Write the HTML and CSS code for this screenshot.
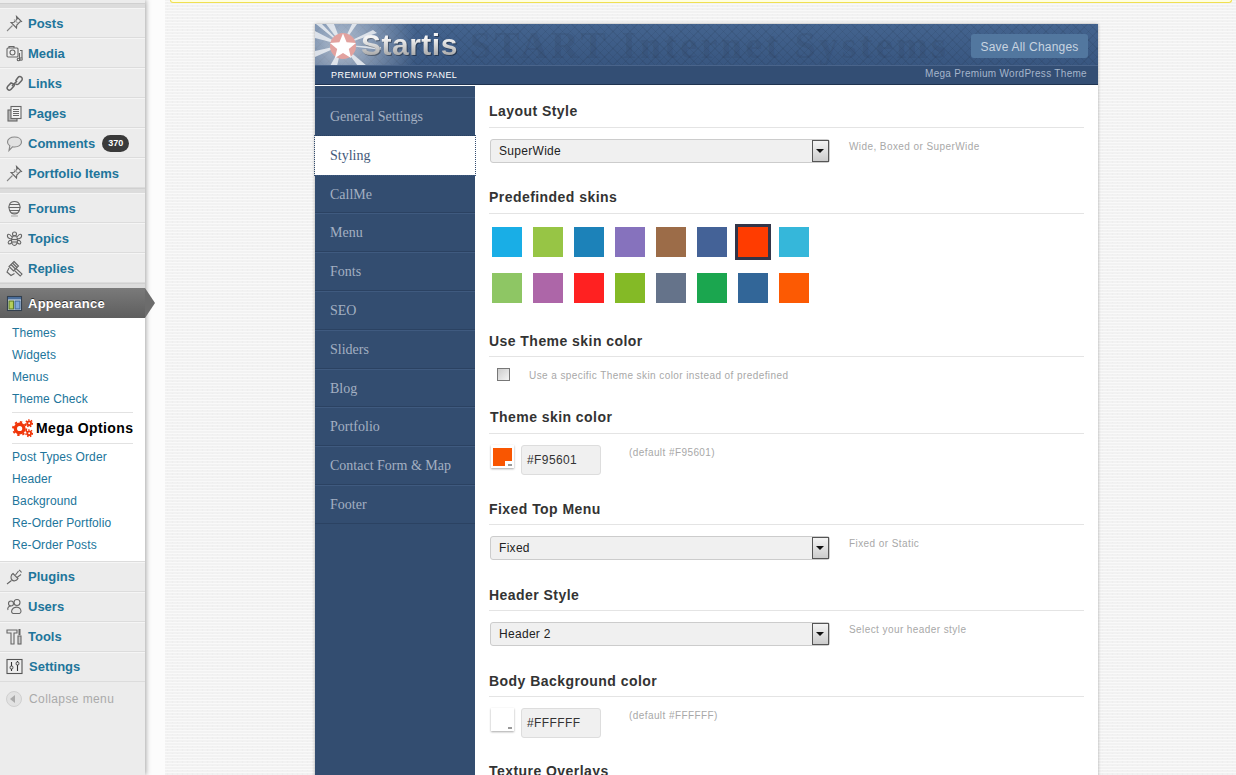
FILE: index.html
```html
<!DOCTYPE html>
<html lang="en">
<head>
    <meta charset="UTF-8">
    <meta name="viewport" content="width=device-width, initial-scale=1.0">
    <title>Mega Options</title>
    <link rel="stylesheet" href="styles.css">
</head>
<body>
    <svg width="0" height="0" class="defs">
        <defs>
            <g id="i-pin">
                <path d="M10.500 1.500l5 5-1.800 .6-2.900 2.900-.3 3-5.500-5.500 3-.3 2.900-2.900z" fill="#ececec"/>
                <path d="M8 4.500l4 4" stroke="#aaa"/>
                <path d="M6.500 10.500L1 16" stroke="#888"/>
            </g>
        </defs>
    </svg>

    <!-- Admin menu -->
    <div class="adminmenu">
        <div class="sep first"></div>
        <a class="item up" href="#"><svg class="ico" viewBox="0 0 17 17"><use href="#i-pin"/></svg><span>Posts</span></a>
        <a class="item up" href="#"><svg class="ico" viewBox="0 0 17 17"><rect x="1" y="3" width="11" height="9" rx="1" fill="#eee"/><circle cx="6.500" cy="7.500" r="2.500"/><path d="M3 3V1.500h5V3M14 5.500h2V13M13.500 8v6"/><circle cx="12.500" cy="14.500" r="1.300"/><circle cx="15" cy="14" r="1.300"/></svg><span>Media</span></a>
        <a class="item up" href="#"><svg class="ico" viewBox="0 0 17 17"><path d="M9.500 6l2.500-3.500c1-1.200 2.500-1.200 3.500-.3s1 2.500 0 3.500L12.500 9c-1 .8-2 .8-3-.2" stroke-width="1.500"/><path d="M7.500 9L5 8 1.800 11.200c-1 1.200-.8 2.500 0 3.300s2.300 1 3.300-.2L8 11c.8-1 .6-1.600 0-2.500" stroke-width="1.500"/><path d="M6 11l5-5" stroke-width="1.600"/></svg><span>Links</span></a>
        <a class="item up" href="#"><svg class="ico" viewBox="0 0 17 17"><rect x="2" y="5" width="9" height="11" fill="#b5b5b5"/><rect x="5" y="1.500" width="10" height="12" fill="#f2f2f2"/><path d="M7 4.500h6M7 6.500h6M7 8.500h6M7 10.500h6"/></svg><span>Pages</span></a>
        <a class="item up" href="#"><svg class="ico" viewBox="0 0 17 17"><path d="M8.500 2c4 0 7 2 7 5s-3 5-7 5c-.7 0-1.200 0-2-.2L3 15.500l.8-4.700C2.300 9.900 1.500 8.500 1.500 7c0-3 3-5 7-5z" fill="#e2e2e2" stroke="#888"/></svg><span>Comments</span><b class="count">370</b></a>
        <a class="item up" href="#"><svg class="ico" viewBox="0 0 17 17"><use href="#i-pin"/></svg><span>Portfolio Items</span></a>
        <div class="sep"></div>
        <a class="item up" href="#"><svg class="ico" viewBox="0 0 17 17"><path d="M8.500 1.500c3 0 4.500 1.500 5 3 .8 1.500 1 3.500 0 5.500-.7 2-2.500 4-5 4s-4.300-2-5-4c-1-2-.8-4 0-5.500.5-1.500 2-3 5-3z" fill="#ececec"/><path d="M3.500 4.500h10M2.800 7.500h11.400M3.500 10.500h10M5.500 13h6"/><path d="M5 16h7" stroke="#aaa"/></svg><span>Forums</span></a>
        <a class="item up" href="#"><svg class="ico" viewBox="0 0 17 17"><ellipse cx="8.500" cy="10.500" rx="3" ry="5" fill="#ddd"/><circle cx="8.500" cy="4" r="2"/><path d="M6 7C3 3 1 4 1.500 6.500 2 8.500 5 9 6 8.500M11 7c3-4 5-3 4.500-.5-.5 2-3.500 2.500-4.500 2M5.500 10.500C3 10 1.500 12 2.500 13.500 3.500 14.500 5 13.500 6 12.500M11.500 10.500c2.500-.5 4 1.500 3 3-1 1-2.500 0-3.500-1M6 9.500h5M6 12h5"/></svg><span>Topics</span></a>
        <a class="item up" href="#"><svg class="ico" viewBox="0 0 17 17"><path d="M8 1.500l4.500 4.500-5 5L3 6.500z" fill="#e4e4e4"/><path d="M5 4.500l4.500 4.500M6.500 3l4.500 4.500M10 8.500l6 5.500-1.800 2-5.700-5.500M3 8L1 12l4 3.500 3.500-2"/></svg><span>Replies</span></a>
        <div class="sep"></div>
        <a class="item current" href="#"><svg class="ico app" viewBox="0 0 17 17"><rect x="1.500" y="1.500" width="14" height="14" fill="#dfe6ee" stroke="#33404f"/><rect x="2" y="2" width="13" height="2.500" fill="#4a6d9a" stroke="none"/><rect x="3" y="6" width="4.500" height="8" fill="#b6cf5a" stroke="#5d7a2a"/><rect x="9" y="6" width="5" height="8" fill="#7fa6d6" stroke="#3f6797"/></svg><span>Appearance</span></a>
        <div class="submenu">
            <a href="#">Themes</a>
            <a href="#">Widgets</a>
            <a href="#">Menus</a>
            <a href="#">Theme Check</a>
            <a class="mega" href="#">
                <svg class="gears" viewBox="0 0 22 20"><g fill="none" stroke="#f0360a"><circle cx="8" cy="10" r="4.500" stroke-width="3.500"/><circle cx="8" cy="10" r="7" stroke-width="2" stroke-dasharray="2.500 3"/><circle cx="18" cy="4.500" r="2" stroke-width="2"/><circle cx="18" cy="4.500" r="3.500" stroke-width="1.500" stroke-dasharray="1.500 1.500"/><circle cx="18" cy="15" r="2" stroke-width="2"/><circle cx="18" cy="15" r="3.500" stroke-width="1.500" stroke-dasharray="1.500 1.500"/></g></svg>
                <span>Mega Options</span>
            </a>
            <a href="#">Post Types Order</a>
            <a href="#">Header</a>
            <a href="#">Background</a>
            <a href="#">Re-Order Portfolio</a>
            <a href="#">Re-Order Posts</a>
        </div>
        <a class="item" href="#"><svg class="ico" viewBox="0 0 17 17"><path d="M7 5.500l5 5c-1.500 2.500-4.500 3-6 1.500S4.500 7 7 5.500z" fill="#e0e0e0"/><path d="M9.500 7l3-4M11 9.500l4-3M5.500 12.500L1 16M13 2c1 .5 2 1.500 2.500 2.500"/></svg><span>Plugins</span></a>
        <a class="item" href="#"><svg class="ico" viewBox="0 0 17 17"><circle cx="5" cy="5.500" r="2.500" fill="#e8e8e8"/><circle cx="11" cy="4.500" r="3" fill="#eee"/><path d="M2 12c-1-2.500 1-4 3-4M7 15.500c-2-.5-2-3.500 .5-5.500 2-1 5-1 6.500 .5 1.500 2 1.300 4.500-.5 5z" fill="#e8e8e8"/></svg><span>Users</span></a>
        <a class="item" href="#"><svg class="ico" viewBox="0 0 17 17"><path d="M1 2h10v3H8v11H5V5H1z" fill="#e8e8e8"/><path d="M13.500 1v6" stroke-width="2"/><rect x="12" y="8" width="3" height="8" fill="#ccc"/></svg><span>Tools</span></a>
        <a class="item" href="#"><svg class="ico" viewBox="0 0 17 17"><rect x="1" y="1.500" width="15" height="14" fill="#eee" stroke="#555"/><circle cx="5.500" cy="9.500" r="1.500"/><circle cx="11.500" cy="5.500" r="1.500"/><path d="M5.500 4v4M5.500 11v2M11.500 7v6M11.500 3v1" stroke="#333"/></svg><span class="wide">Settings</span></a>
        <div class="collapse"><i class="collapse-btn"></i><span>Collapse menu</span></div>
    </div>

    <!-- Content -->
    <div class="wrap">
        <div class="notice"></div>
        <div class="panel">
            <div class="panel-head">
                <div class="head-top">
                    <div class="brand">
                        <svg class="burst" viewBox="0 0 70 42">
                            <path d="M27 21L0 7v7zM27 21L0 33v-6zM27 21L11 0h8zM27 21L42 0h-5zM27 21L15 42h7zM27 21L62 9 58 6zM27 21L52 42h-9zM27 21L1 0h6zM27 21L66 26v-3z" fill="#fff" opacity=".7"/>
                            <circle cx="28" cy="22" r="13" fill="#e2a29f"/>
                            <path d="M28 9.500l3.600 8.700 9.400 .7-7.200 6 2.300 9.100-8.100-5-8.100 5 2.300-9.100-7.200-6 9.400-.7z" fill="#fff"/>
                        </svg>
                        <span class="logo">Startis</span>
                    </div>
                    <span class="watermark">START Internet Systems</span>
                    <a class="save" href="#">Save All Changes</a>
                </div>
                <div class="head-sub">
                    <span class="panel-label">PREMIUM OPTIONS PANEL</span>
                    <span class="panel-tag">Mega Premium WordPress Theme</span>
                </div>
            </div>
            <div class="panel-body">
                <div class="tabs">
                    <a href="#">General Settings</a>
                    <a class="on" href="#">Styling</a>
                    <a href="#">CallMe</a>
                    <a href="#">Menu</a>
                    <a href="#">Fonts</a>
                    <a href="#">SEO</a>
                    <a href="#">Sliders</a>
                    <a href="#">Blog</a>
                    <a href="#">Portfolio</a>
                    <a href="#">Contact Form &amp; Map</a>
                    <a href="#">Footer</a>
                </div>
                <div class="options">
                    <div class="opt first">
                        <h3 class="tall">Layout Style</h3>
                        <div class="row">
                            <div class="select"><span>SuperWide</span><i class="arrow"></i></div>
                            <span class="desc">Wide, Boxed or SuperWide</span>
                        </div>
                    </div>
                    <div class="opt h144">
                        <h3 class="tall">Predefinded skins</h3>
                        <div class="skins">
                            <i style="background:#19aee6"></i>
                            <i style="background:#97c545"></i>
                            <i style="background:#1c82b9"></i>
                            <i style="background:#8672bd"></i>
                            <i style="background:#9c6c48"></i>
                            <i style="background:#446297"></i>
                            <i class="picked" style="background:#ff3c00"></i>
                            <i style="background:#35b7da"></i>
                            <i style="background:#8ec664"></i>
                            <i style="background:#ad66a8"></i>
                            <i style="background:#ff2121"></i>
                            <i style="background:#84ba26"></i>
                            <i style="background:#65738a"></i>
                            <i style="background:#1ba64f"></i>
                            <i style="background:#326698"></i>
                            <i style="background:#fc5a03"></i>
                        </div>
                    </div>
                    <div class="opt h76">
                        <h3>Use Theme skin color</h3>
                        <div class="check-row">
                            <i class="check"></i>
                            <span class="desc">Use a specific Theme skin color instead of predefined</span>
                        </div>
                    </div>
                    <div class="opt h92">
                        <h3 class="tall nudge">Theme skin color</h3>
                        <div class="color-row">
                            <div class="picker"><i style="background:#f95601"></i></div>
                            <div class="hex">#F95601</div>
                            <span class="desc">(default #F95601)</span>
                        </div>
                    </div>
                    <div class="opt h86">
                        <h3>Fixed Top Menu</h3>
                        <div class="row">
                            <div class="select"><span>Fixed</span><i class="arrow"></i></div>
                            <span class="desc">Fixed or Static</span>
                        </div>
                    </div>
                    <div class="opt h86">
                        <h3>Header Style</h3>
                        <div class="row">
                            <div class="select"><span>Header 2</span><i class="arrow"></i></div>
                            <span class="desc">Select your header style</span>
                        </div>
                    </div>
                    <div class="opt h90">
                        <h3>Body Background color</h3>
                        <div class="color-row">
                            <div class="picker"><i style="background:#ffffff"></i></div>
                            <div class="hex">#FFFFFF</div>
                            <span class="desc">(default #FFFFFF)</span>
                        </div>
                    </div>
                    <div class="opt">
                        <h3>Texture Overlays</h3>
                    </div>
                </div>
            </div>
        </div>
    </div>
</body>
</html>
```

FILE: styles.css
```css
/* Page */
html, body {
    margin: 0;
    height: 775px;
    overflow: hidden;
}

body {
    display: flex;
    font-family: "Liberation Sans", Arial, sans-serif;
    background-color: #fcfcfc;
}

a {
    text-decoration: none;
}

.defs {
    position: absolute;
}

/* Admin menu */
.adminmenu {
    flex: 0 0 145px;
    width: 145px;
    background-color: #ececec;
    box-shadow: 1px 0 5px rgba(0, 0, 0, 0.35);
    position: relative;
    z-index: 2;
}

.sep {
    height: 4px;
    background-color: #dcdcdc;
    border-top: 1px solid #d0d0d0;
}

.sep.first {
    margin-top: 3px;
}

.item {
    display: flex;
    align-items: center;
    height: 29px;
    border-bottom: 1px solid #dcdcdc;
    box-shadow: inset 0 1px 0 #f5f5f5;
    padding-left: 6px;
    font-size: 13px;
    font-weight: bold;
    color: #21759b;
}

.item.up {
    height: 27px;
    padding-top: 2px;
}

.ico {
    width: 17px;
    height: 17px;
    margin-right: 5px;
    flex: none;
    fill: none;
    stroke: #666;
    stroke-width: 1.1;
}

.wide {
    margin-left: 1px;
}

.count {
    margin-left: 7px;
    width: 27px;
    height: 17px;
    line-height: 17px;
    border-radius: 9px;
    background-color: #3a3a3a;
    color: #fff;
    font-size: 9px;
    text-align: center;
}

.item.current {
    position: relative;
    height: 30px;
    border: 0;
    box-shadow: none;
    color: #fff;
    letter-spacing: 0.25px;
    background: linear-gradient(#7a7a7a, #5e5e5e);
    text-shadow: 0 -1px 0 #333;
}

.item.current::after {
    content: "";
    position: absolute;
    left: 145px;
    top: 0;
    border-left: 10px solid #6c6c6c;
    border-top: 15px solid transparent;
    border-bottom: 15px solid transparent;
}

.submenu {
    background-color: #fff;
    padding: 4px 12px 5px;
    border-bottom: 1px solid #dcdcdc;
}

.submenu a {
    display: block;
    height: 22px;
    line-height: 22px;
    font-size: 12px;
    letter-spacing: 0.1px;
    color: #21759b;
}

.submenu a.mega {
    display: flex;
    align-items: center;
    height: 30px;
    margin: 2px 0;
    border-top: 1px solid #e2e2e2;
    border-bottom: 1px solid #e2e2e2;
    font-size: 14px;
    font-weight: bold;
    letter-spacing: 0.4px;
    white-space: nowrap;
    color: #000;
}

.gears {
    flex: none;
    width: 21px;
    height: 19px;
    margin-right: 3px;
}

.collapse {
    display: flex;
    align-items: center;
    height: 34px;
    padding-left: 6px;
    font-size: 12px;
    color: #aaa;
    letter-spacing: 0.4px;
}

.collapse-btn {
    position: relative;
    width: 16px;
    height: 16px;
    margin-right: 7px;
    border-radius: 50%;
    background-color: #e2e2e2;
    border: 1px solid #d0d0d0;
    box-sizing: border-box;
}

.collapse-btn::after {
    content: "";
    position: absolute;
    left: 3px;
    top: 3px;
    border-right: 5px solid #aaa;
    border-top: 4px solid transparent;
    border-bottom: 4px solid transparent;
}

/* Content */
.wrap {
    flex: 1;
    margin-left: 20px;
    background-color: #f2f2f2;
    background-image:
        radial-gradient(circle, #f9f9f9 30%, transparent 42%),
        radial-gradient(circle, #eeeeee 25%, transparent 36%);
    background-size: 2px 3px, 5px 4px;
}

.notice {
    height: 2px;
    margin: 0 4px 21px 5px;
    background-color: #ffffe0;
    border: 1px solid #f0e050;
    border-top: 0;
    border-radius: 0 0 3px 3px;
}

.panel {
    width: 783px;
    margin-left: 150px;
    background-color: #fff;
    box-shadow: 0 0 3px rgba(0, 0, 0, 0.3);
}

.panel-head {
    height: 61px;
    border-bottom: 1px solid #fff;
}

.head-top {
    display: flex;
    align-items: center;
    height: 42px;
    overflow: hidden;
    box-sizing: border-box;
    padding-right: 10px;
    border-bottom: 1px solid #4a648a;
    background-color: #3f5f8e;
    background-image:
        repeating-linear-gradient(45deg, rgba(0, 0, 0, 0.06) 0 1px, transparent 1px 6px),
        repeating-linear-gradient(-45deg, rgba(0, 0, 0, 0.06) 0 1px, transparent 1px 6px),
        linear-gradient(#44648f, #385680);
}

.brand {
    display: flex;
    flex: none;
    width: 155px;
    height: 41px;
    background: radial-gradient(circle at 27px 21px, rgba(255, 255, 255, 0.6), transparent 75px);
}

.burst {
    width: 70px;
    height: 42px;
    flex: none;
}

.logo {
    margin-left: -24px;
    line-height: 41px;
    font-size: 30px;
    font-weight: bold;
    letter-spacing: 0.5px;
    color: transparent;
    background: linear-gradient(#f4f4f4 35%, #9a9a9a 85%);
    -webkit-background-clip: text;
    background-clip: text;
    filter: drop-shadow(1px 1px 0 rgba(0, 0, 0, 0.35));
}

.watermark {
    flex: 1;
    line-height: 40px;
    font-family: "Liberation Serif", serif;
    font-size: 38px;
    letter-spacing: 3.4px;
    font-weight: bold;
    white-space: nowrap;
    color: rgba(40, 50, 70, 0.15);
}

.save {
    flex: none;
    width: 117px;
    height: 24px;
    margin-top: 2px;
    line-height: 26px;
    text-align: center;
    border-radius: 3px;
    background-color: #52779f;
    color: #c8d4e0;
    font-size: 12px;
    letter-spacing: 0.2px;
}

.head-sub {
    display: flex;
    justify-content: space-between;
    align-items: center;
    height: 18px;
    padding: 0 11px 0 16px;
    background-color: #334e74;
    border-bottom: 1px solid #1f3350;
}

.panel-label {
    color: #fff;
    font-size: 9px;
    letter-spacing: 0.45px;
}

.panel-tag {
    margin-bottom: 3px;
    color: #a5b5cb;
    font-size: 10px;
    letter-spacing: 0.3px;
}

.panel-body {
    display: flex;
    height: 700px;
}

/* Tabs */
.tabs {
    flex: 0 0 160px;
    box-sizing: border-box;
    padding-top: 11px;
    background-color: #334d70;
}

.tabs a {
    display: block;
    box-sizing: border-box;
    height: 38.8px;
    line-height: 37px;
    padding-left: 15px;
    border-top: 1px solid #3f5a7f;
    border-bottom: 1px solid #2b4262;
    font-family: "Liberation Serif", serif;
    font-size: 14px;
    color: #a3b0c2;
}

.tabs a.on {
    background-color: #fff;
    color: #44597a;
    outline: 1px dotted #334d70;
    border-color: #fff;
}

/* Options */
.options {
    flex: 1;
    padding: 0 14px;
    overflow: hidden;
}

.opt {
    box-sizing: border-box;
}

.opt.first {
    height: 102px;
    padding-top: 16px;
}

.h86 { height: 86px; }
.h144 { height: 144px; }
.h76 { height: 76px; }
.h92 { height: 92px; }
.h90 { height: 90px; }

h3 {
    margin: 0 0 11px;
    height: 24px;
    line-height: 18px;
    border-bottom: 1px solid #e4e4e4;
    font-size: 14px;
    letter-spacing: 0.45px;
    color: #333;
}

h3.tall {
    height: 25px;
}

h3.nudge {
    padding-left: 1px;
}

.row {
    display: flex;
    align-items: flex-start;
    padding-left: 1px;
}

.select {
    display: flex;
    align-items: center;
    justify-content: space-between;
    box-sizing: border-box;
    width: 340px;
    height: 24px;
    padding-left: 8px;
    border: 1px solid #ccc;
    border-radius: 3px;
    background-color: #f0f0f0;
    font-size: 12px;
    letter-spacing: 0.3px;
    color: #222;
}

.arrow {
    position: relative;
    box-sizing: border-box;
    width: 17px;
    height: 22px;
    border: 1px solid #555;
    background: linear-gradient(#f4f4f4, #ccc);
}

.arrow::after {
    content: "";
    position: absolute;
    left: 3px;
    top: 8px;
    border-top: 4px solid #111;
    border-left: 4px solid transparent;
    border-right: 4px solid transparent;
}

.desc {
    margin-left: 19px;
    padding-top: 2px;
    font-size: 10px;
    letter-spacing: 0.42px;
    color: #a8a8a8;
}

/* Skins */
.skins {
    display: grid;
    grid-template-columns: repeat(8, 30px);
    grid-auto-rows: 30px;
    gap: 16px 11px;
    padding: 2px 0 0 3px;
}

.skins i {
    display: block;
}

.skins i.picked {
    outline: 3px solid #333548;
}

/* Checkbox */
.check-row {
    display: flex;
    align-items: center;
    padding-left: 8px;
    margin-top: 2px;
}

.check {
    box-sizing: border-box;
    width: 13px;
    height: 13px;
    border: 1px solid #777;
    background: linear-gradient(135deg, #ccc, #f4f4f4);
}

/* Colour inputs */
.color-row {
    display: flex;
    align-items: flex-start;
    padding-left: 2px;
}

.picker {
    position: relative;
    box-sizing: border-box;
    width: 23px;
    height: 23px;
    padding: 3px 2px;
    background-color: #fff;
    box-shadow: 0 1px 2px rgba(0, 0, 0, 0.35);
}

.picker i {
    display: block;
    height: 18px;
}

.picker::after {
    content: "";
    position: absolute;
    right: 0;
    bottom: 0;
    width: 9px;
    height: 7px;
    background: linear-gradient(#999, #999) no-repeat 3px 3px / 4px 2px #fff;
}

.hex {
    box-sizing: border-box;
    width: 80px;
    height: 30px;
    line-height: 29px;
    margin-left: 7px;
    padding-left: 5px;
    border: 1px solid #ddd;
    border-radius: 3px;
    background-color: #f0f0f0;
    font-size: 12px;
    letter-spacing: 0.4px;
    color: #333;
}

.color-row .desc {
    margin-left: 28px;
}
```
